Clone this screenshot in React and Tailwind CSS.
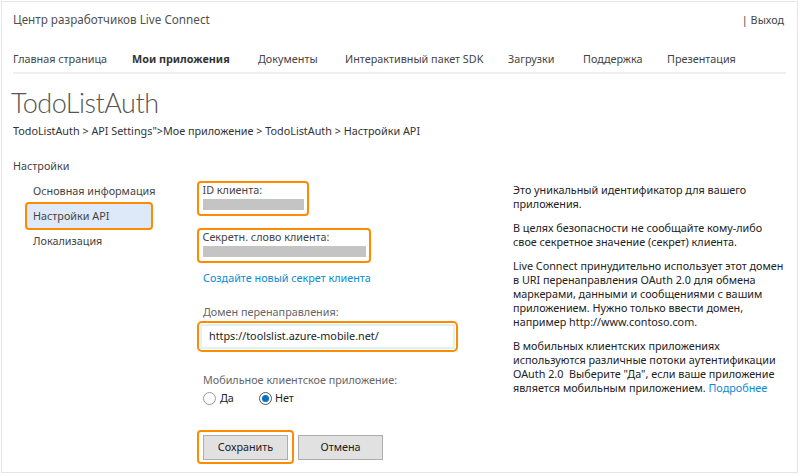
import React from "react";

function NavItem({ children, bold, w }) {
  return (
    <div className={`${w} shrink-0 whitespace-nowrap ${bold ? "font-bold text-[#333]" : "text-[#444]"}`}>{children}</div>
  );
}

export default function App() {
  return (
    <div className="w-[800px] h-[476px] bg-white pl-[1px] pt-[1px] font-['Noto_Sans',sans-serif]">
      <div className="w-[797px] h-[472px] border border-[#e6e6e6] pl-[11px] pr-[11px] text-[10.8px] text-[#333]">
        {/* header */}
        <div className="flex justify-between items-center h-[36px]">
          <span className="text-[11.7px] text-[#505050]">Центр разработчиков Live Connect</span>
          <span className="text-[10.8px] text-[#444] mr-[2px]">| Выход</span>
        </div>
        {/* nav */}
        <div className="flex h-[36px] pt-[13px] leading-[16px] border-b-2 border-[#efefef] text-[10.8px]">
          <NavItem w="w-[119px]">Главная страница</NavItem>
          <NavItem w="w-[126px]" bold>Мои приложения</NavItem>
          <NavItem w="w-[87px]">Документы</NavItem>
          <NavItem w="w-[163px]">Интерактивный пакет SDK</NavItem>
          <NavItem w="w-[75px]">Загрузки</NavItem>
          <NavItem w="w-[84px]">Поддержка</NavItem>
          <NavItem w="w-[90px]">Презентация</NavItem>
        </div>
        {/* title */}
        <div className="mt-[12px] -ml-[2px] text-[27px] leading-[34px] tracking-[-0.5px] font-light text-[#555] font-['Lato',sans-serif]">TodoListAuth</div>
        <div className="mt-[3px] leading-[16px] text-[#333]">
          TodoListAuth &gt; API Settings"&gt;Мое приложение &gt; TodoListAuth &gt; Настройки API
        </div>
        <div className="mt-[19px] leading-[16px] text-[#444]">Настройки</div>
        {/* main */}
        <div className="flex mt-[7px]">
          {/* left nav */}
          <div className="w-[184px] pl-[12px] text-[#444]">
            <div className="h-[20px] leading-[20px] pl-[8px]">Основная информация</div>
            <div className="h-[28px] w-[128px] border-[2.5px] border-[#ff8c00] rounded-[4px] bg-[#dde9f8] flex items-center pl-[6px] mt-[1px]">
              Настройки API
            </div>
            <div className="h-[22px] leading-[22px] pl-[8px]">Локализация</div>
          </div>
          {/* center form */}
          <div className="w-[316px]">
            <div className="w-[112px] h-[35px] border-[2.5px] border-[#ff8c00] rounded-[4px] pl-[3.5px]">
              <div className="text-[#444] leading-[14px]">ID клиента:</div>
              <div className="w-[101px] h-[11px] bg-[#c4c4c4] mt-[2px]"></div>
            </div>
            <div className="w-[174px] h-[35px] border-[2.5px] border-[#ff8c00] rounded-[4px] pl-[3.5px] mt-[12px]">
              <div className="text-[#444] leading-[14px]">Секретн. слово клиента:</div>
              <div className="w-[163px] h-[11px] bg-[#c4c4c4] mt-[2px]"></div>
            </div>
            <div className="mt-[7px] ml-[6px] leading-[16px] text-[#0b8ad3]">Создайте новый секрет клиента</div>
            <div className="mt-[18px] ml-[6px] leading-[16px] text-[#666]">Домен перенаправления:</div>
            <div className="mt-[1px] w-[261px] h-[31px] border-[2.5px] border-[#ff8c00] rounded-[5px] p-[1px]">
              <div className="w-full h-full border-2 border-[#dff3f6] bg-white flex items-center pl-[7px] text-[#222]">
                https://toolslist.azure-mobile.net/
              </div>
            </div>
            <div className="mt-[20px] ml-[6px] leading-[16px] text-[#666]">Мобильное клиентское приложение:</div>
            <div className="mt-[2px] ml-[6px] h-[16px] flex items-center text-[#222]">
              <span className="w-[13px] h-[13px] rounded-full border border-[#9a9a9a] bg-white inline-block"></span>
              <span className="ml-[4px]">Да</span>
              <span className="ml-[25px] w-[13px] h-[13px] rounded-full border border-[#555] bg-white inline-flex items-center justify-center">
                <span className="w-[7px] h-[7px] rounded-full bg-[#0073c6]"></span>
              </span>
              <span className="ml-[3px]">Нет</span>
            </div>
            <div className="mt-[24px] flex items-center">
              <div className="w-[97px] h-[34px] border-[2.5px] border-[#ff8c00] rounded-[4px] flex items-center justify-center">
                <button className="w-[85px] h-[25px] bg-[#e1e1e1] border border-[#adadad] text-[#222]">Сохранить</button>
              </div>
              <button className="ml-[4px] w-[85px] h-[25px] bg-[#e1e1e1] border border-[#adadad] text-[#222]">Отмена</button>
            </div>
          </div>
          {/* right text */}
          <div className="w-[268px] pt-[2px] leading-[14px] text-[#222] whitespace-nowrap">
            <p>Это уникальный идентификатор для вашего<br />приложения.</p>
            <p className="mt-[10px]">В целях безопасности не сообщайте кому-либо<br />свое секретное значение (секрет) клиента.</p>
            <p className="mt-[10px]">
              Live Connect принудительно использует этот домен<br />в URI перенаправления OAuth 2.0 для обмена<br />маркерами, данными и сообщениями с вашим<br />приложением. Нужно только ввести домен,<br />например http://www.contoso.com.
            </p>
            <p className="mt-[10px]">
              В мобильных клиентских приложениях<br />используются различные потоки аутентификации<br />OAuth 2.0&nbsp; Выберите "Да", если ваше приложение<br />является мобильным приложением. <span className="text-[#0b8ad3]">Подробнее</span>
            </p>
          </div>
        </div>
      </div>
    </div>
  );
}
